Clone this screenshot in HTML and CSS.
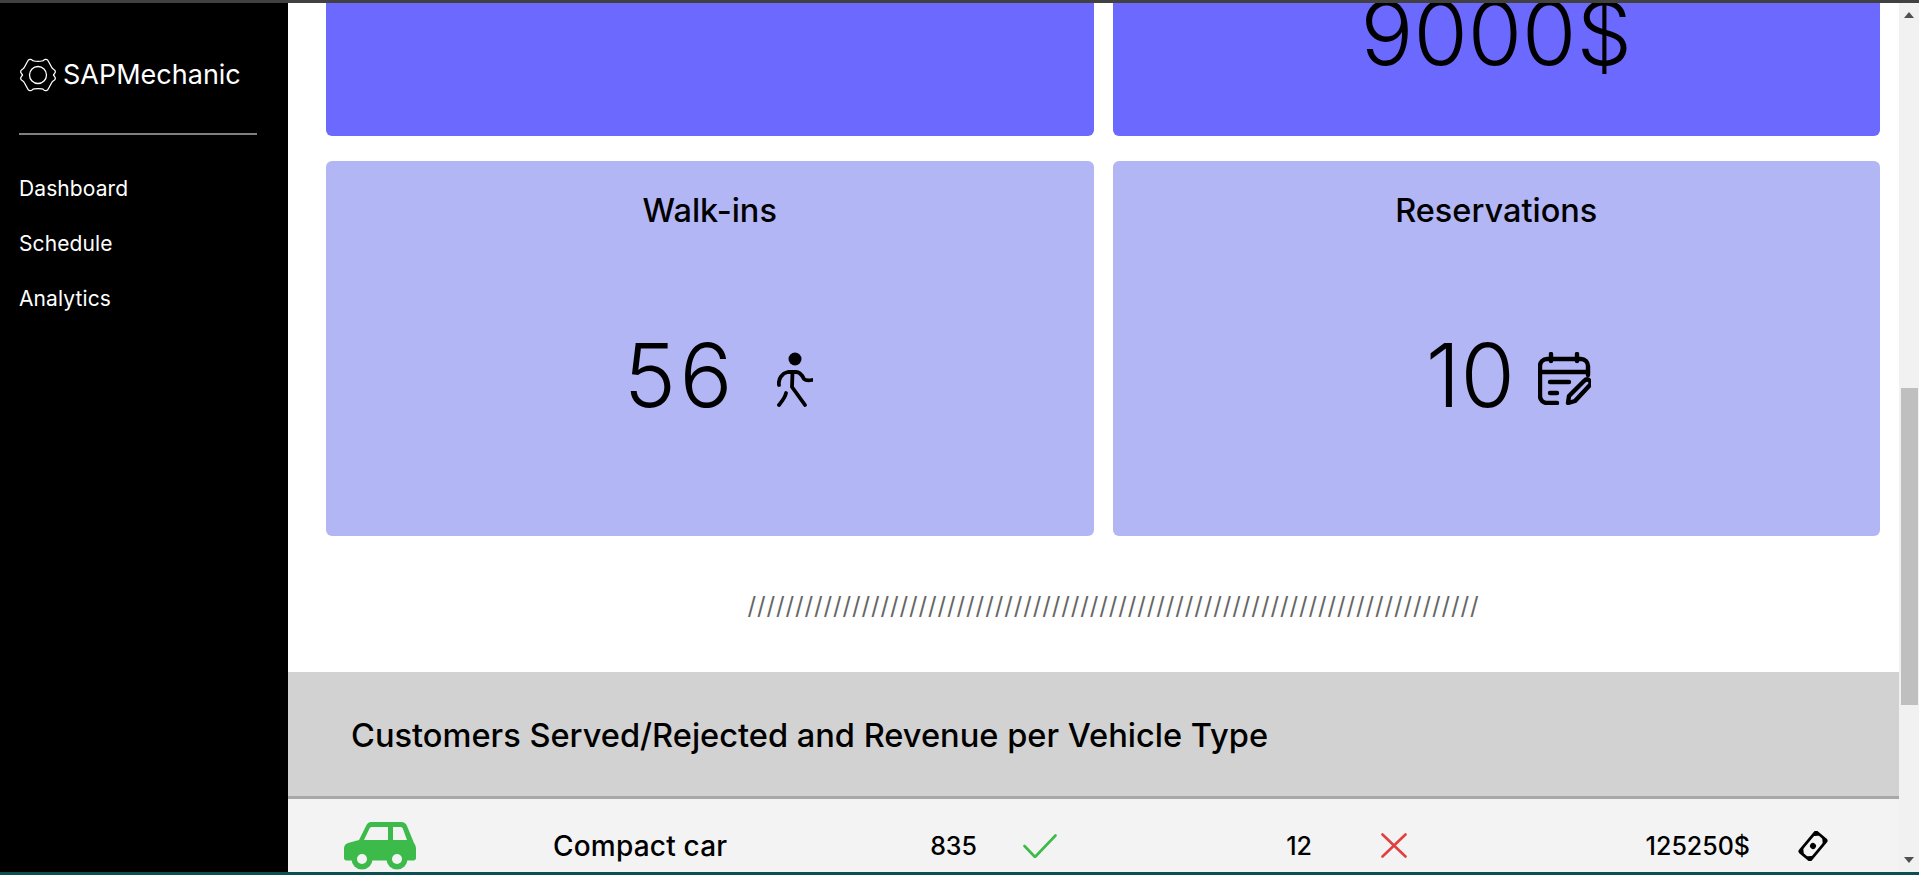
FILE: index.html
```html
<!DOCTYPE html>
<html lang="en">
<head>
<meta charset="utf-8">
<title>SAPMechanic</title>
<link rel="stylesheet" href="styles.css">
</head>
<body>
<div class="top-strip"></div>
<div class="app">
  <aside class="sidebar">
    <div class="brand">
      <svg class="gear" viewBox="0 0 38 34" fill="none" stroke="#fff" stroke-width="1.300" stroke-linejoin="round">
        <path d="M8.500 3.500C9.500 1 12 .8 13.200 2.200 14 3.200 15.500 3.400 19 3.400s5-.2 5.800-1.200C26 .8 28.500 1 29.500 3.500l3 5.500c.5 1 1 1.600 2 2.200 2 1.100 2.300 2.800 1.300 4L34.500 17l1.300 1.800c1 1.200.7 2.900-1.300 4-1 .6-1.500 1.200-2 2.200l-3 5.500c-1 2.500-3.500 2.700-4.700 1.300-.8-1-2.300-1.200-5.800-1.200s-5 .2-5.800 1.200C12 33.200 9.500 33 8.500 30.500l-3-5.500c-.5-1-1-1.600-2-2.200-2-1.100-2.300-2.800-1.300-4L3.500 17l-1.300-1.800c-1-1.200-.7-2.900 1.300-4 1-.6 1.500-1.200 2-2.200z"/>
        <circle cx="19" cy="17" r="8.500"/>
      </svg>
      <span class="brand-name">SAPMechanic</span>
    </div>
    <hr class="rule">
    <nav class="nav">
      <a class="nav-link">Dashboard</a>
      <a class="nav-link">Schedule</a>
      <a class="nav-link">Analytics</a>
    </nav>
  </aside>

  <main class="main">
    <div class="cards">
      <div class="card card-strong"></div>
      <div class="card card-strong card-clipped"><span class="big-number">9000$</span></div>
      <div class="card card-soft">
        <h2 class="card-title">Walk-ins</h2>
        <div class="card-value card-value-walk">
          <span class="big-number big-number-wide">56</span>
          <svg class="walker" viewBox="0 0 36 55" fill="none" stroke="#000" stroke-width="3.800" stroke-linecap="round" stroke-linejoin="round">
            <circle cx="18" cy="7" r="6.500" fill="#000" stroke="none"/>
            <path d="M2 33c-1-6 3-12 9-13h8c4 0 6 3 8 7 2 2 5 1.500 8 1"/>
            <path d="M15.500 20.500 15 35l13 18"/>
            <path d="M9 41c-1 5-4 8-7 12"/>
          </svg>
        </div>
      </div>
      <div class="card card-soft">
        <h2 class="card-title">Reservations</h2>
        <div class="card-value">
          <span class="big-number">10</span>
          <svg class="calendar" viewBox="0 0 53 53" fill="none" stroke="#000" stroke-width="4.400" stroke-linecap="round" stroke-linejoin="round">
            <path d="M19 51H9a7 7 0 0 1-7-7V14a7 7 0 0 1 7-7h34a7 7 0 0 1 7 7v9"/>
            <path d="M2 20h48M13 2v7M39 2v7"/>
            <path d="M12 30h19M12 41h7"/>
            <path d="M30 51l1-7 15-15c2-2 4-2 5.500-.5s1.500 3.500-.5 5.500L37 49z"/>
          </svg>
        </div>
      </div>
    </div>

    <div class="divider">/////////////////////////////////////////////////////////////////////////////</div>

    <section class="revenue">
      <h2 class="revenue-title">Customers Served/Rejected and Revenue per Vehicle Type</h2>
      <div class="vehicle-row">
        <svg class="car" viewBox="0 0 72 48">
          <path class="car-body" fill-rule="evenodd" d="M27 0h30c3 0 5 1.500 6 4l7 17c1.500 2 2 4 2 6v9c0 1.500-1 2.500-2.500 2.500H2.500C1 38.500 0 37.500 0 36V27c0-3 1-5 4-6l11-3L22 4c1-2.500 3-4 5-4zM28 5c-1 0-2 .5-2.500 1.500L20 18h24V5zM49 5v13h14L59 7c-.5-1.500-1.500-2-3-2z"/>
          <circle class="car-body" cx="18" cy="37" r="10.500"/>
          <circle class="car-body" cx="53" cy="37" r="10.500"/>
          <circle class="car-hole" cx="18" cy="37" r="5"/>
          <circle class="car-hole" cx="53" cy="37" r="5"/>
        </svg>
        <span class="vehicle-name">Compact car</span>
        <span class="count">835</span>
        <svg class="check" viewBox="0 0 34 24" fill="none" stroke-width="2.600" stroke-linecap="round" stroke-linejoin="round">
          <path d="M1.500 12 12 23 32.500 1.500"/>
        </svg>
        <span class="count">12</span>
        <svg class="cross" viewBox="0 0 26 25" fill="none" stroke-width="2.600" stroke-linecap="round">
          <path d="M1.500 1.500 24.500 23.500M24.500 1.500 1.500 23.500"/>
        </svg>
        <span class="count">125250$</span>
        <svg class="money" viewBox="0 0 30 30">
          <g transform="rotate(-50 15 15)">
            <rect x="2" y="8" width="26" height="14" rx="1.500" fill="none" stroke="#000" stroke-width="2.800"/>
            <circle cx="15" cy="15" r="3" fill="#000"/>
            <path d="M2 8h6l-6 6zM28 22h-6l6-6zM28 8v6l-6-6zM2 22v-6l6 6z" fill="#000"/>
          </g>
        </svg>
      </div>
    </section>
  </main>

  <div class="scrollbar">
    <div class="scroll-up"></div>
    <div class="scroll-thumb"></div>
    <div class="scroll-down"></div>
  </div>
</div>
<div class="bottom-strip"></div>
</body>
</html>
```

FILE: styles.css
```css
* { box-sizing: border-box; }
html, body { height: 100%; }
body {
  margin: 0;
  display: flex;
  flex-direction: column;
  overflow: hidden;
  background: #fff;
  color: #000;
  font-family: "Inter", "Noto Sans", sans-serif;
}
.top-strip { height: 3px; flex: none; background: #414141; }
.bottom-strip { height: 3px; flex: none; background: #0b4f52; }
.app { flex: 1; min-height: 0; display: flex; }

.sidebar { width: 288px; flex: none; background: #000; color: #fff; padding: 55px 31px 0 19px; }
.brand { display: flex; align-items: center; gap: 6px; height: 33px; }
.gear { width: 38px; height: 34px; flex: none; }
.brand-name { font-size: 27px; }
.rule { border: 0; height: 2px; margin: 42px 0 0; background: #808080; }
.nav { display: flex; flex-direction: column; gap: 30px; margin-top: 41px; }
.nav-link { font-size: 21px; line-height: 25px; letter-spacing: .1px; color: #fff; }

.main { width: 1611px; flex: none; overflow: hidden; display: flex; flex-direction: column; }
.cards {
  flex: none;
  display: grid;
  grid-template-columns: 1fr 1fr;
  grid-template-rows: 133px 375px;
  gap: 25px 19px;
  padding: 0 19px 0 38px;
}
.card { border-radius: 0 0 6px 6px; }
.card-strong { background: #6c69ff; }
.card-clipped { display: flex; justify-content: center; align-items: flex-end; padding-bottom: 58px; }
.card-soft { background: #b3b6f5; border-radius: 6px; display: flex; flex-direction: column; align-items: center; padding-top: 30px; }
.card-title { margin: 0; font-size: 32.5px; line-height: 39px; font-weight: 500; }
.card-value { display: flex; align-items: center; gap: 41px; margin-top: 100px; height: 90px; padding-left: 24px; }
.card-value-walk { padding-left: 17px; }
.big-number { font-size: 88px; line-height: 90px; font-weight: 300; }
.big-number-wide { letter-spacing: 3.5px; }
.walker { width: 36px; height: 55px; margin-top: 8px; }
.calendar { width: 53px; height: 53px; margin-top: 6px; margin-left: -18px; }

.divider { flex: none; margin-top: 54px; height: 82px; padding-left: 40px; text-align: center; font-size: 24px; line-height: 32px; color: #666; letter-spacing: .86px; white-space: nowrap; }

.revenue { background: #d2d2d2; flex: 1; min-height: 0; display: flex; flex-direction: column; }
.revenue-title { flex: none; margin: 0; height: 127px; padding: 44px 0 0 63px; font-size: 32.6px; line-height: 38px; font-weight: 500; border-bottom: 3px solid #a8a8a8; }
.vehicle-row {
  flex: 1;
  min-height: 0;
  background: #f3f3f3;
  display: grid;
  grid-template-columns: 209px 250px 174px 136px 199px 136px 302px 1fr;
  align-items: center;
  padding: 20px 0 0 56px;
}
.vehicle-name { font-size: 28px; line-height: 34px; font-weight: 500; letter-spacing: .2px; }
.count { justify-self: end; font-size: 25px; line-height: 34px; font-weight: 500; }
.car { width: 72px; height: 48px; }
.car-body { fill: #3cba4a; }
.car-hole { fill: #f3f3f3; }
.check { width: 34px; height: 24px; margin-left: 46px; stroke: #3cba4a; }
.cross { width: 26px; height: 25px; margin-left: 69px; stroke: #e04040; }
.money { width: 30px; height: 30px; margin-left: 48px; }

.scrollbar { width: 20px; flex: none; background: #f1f1f1; display: flex; flex-direction: column; align-items: center; }
.scroll-up { width: 0; height: 0; margin-top: 9px; border: 5px solid transparent; border-top: 0; border-bottom: 6px solid #505050; }
.scroll-thumb { width: 17px; height: 317px; margin-top: 370px; margin-left: 1px; background: #bfbfbf; flex: none; }
.scroll-down { width: 0; height: 0; margin-top: 152px; border: 5px solid transparent; border-bottom: 0; border-top: 6px solid #505050; }
```
